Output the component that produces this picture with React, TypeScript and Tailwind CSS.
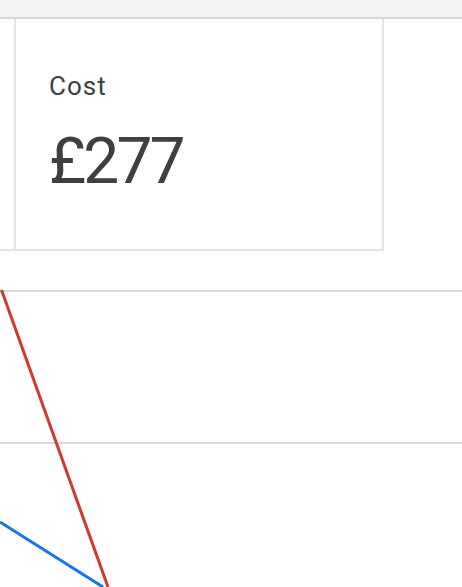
export default function App() {
  return (
    <div className="w-[462px] h-[587px] overflow-hidden bg-white font-['Roboto',sans-serif] text-[#3c4043]">
      <div className="h-[19px] bg-[#f1f2f4] border-b-2 border-[#d5d6da]" />

      <div className="flex w-[384px] h-[232px] border-b-2 border-[#e4e4e9]">
        <div className="w-[16px] border-r-2 border-[#e4e4e9]" />
        <div className="flex-1 border-r-2 border-[#e4e4e9] pl-[33px] pt-[52px]">
          <div className="text-[26px] leading-[30px] tracking-[0.04em]">Cost</div>
          <div className="mt-[28px] text-[64px] leading-[66px] tracking-[-0.045em]">£277</div>
        </div>
      </div>

      <svg width="462" height="336" viewBox="0 0 462 336" className="block">
        <line x1="0" y1="40" x2="462" y2="40" stroke="#dadada" strokeWidth="2" />
        <line x1="0" y1="192" x2="462" y2="192" stroke="#dadada" strokeWidth="2" />
        <line x1="1.5" y1="39" x2="108" y2="336" stroke="#d0392b" strokeWidth="3" />
        <line x1="0" y1="271" x2="103" y2="336" stroke="#1a73e8" strokeWidth="3" />
      </svg>
    </div>
  )
}
